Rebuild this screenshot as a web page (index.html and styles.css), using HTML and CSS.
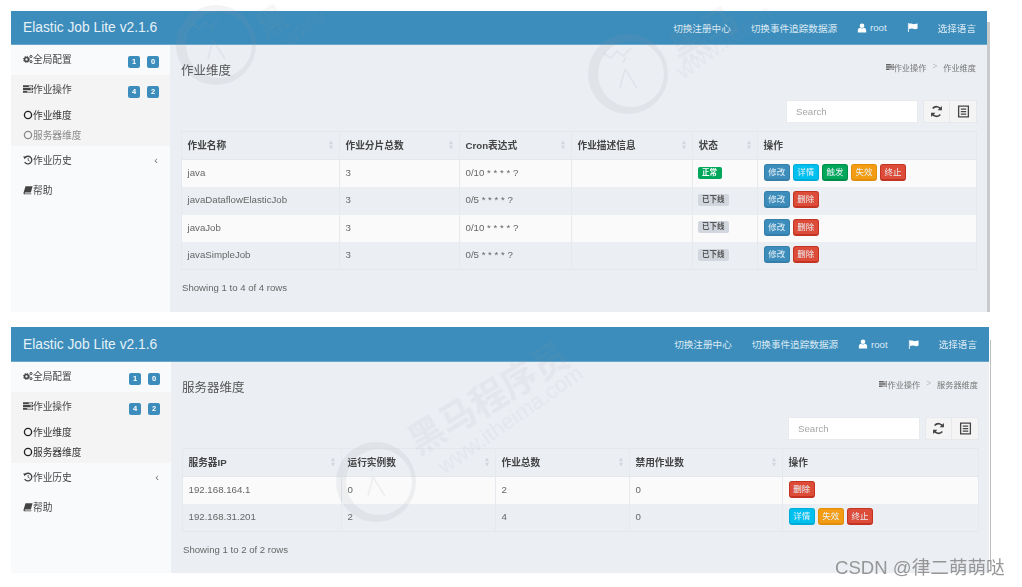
FILE: index.html
```html
<!DOCTYPE html>
<html lang="zh">
<head>
    <meta charset="UTF-8">
    <title>Elastic Job Lite</title>
    <link rel="stylesheet" href="styles.css">
</head>
<body>
<svg class="defs" width="0" height="0">
    <symbol id="i-cogs" viewBox="0 0 12 12">
        <circle cx="4.2" cy="6.5" r="2.3" fill="none" stroke="currentColor" stroke-width="1.8"/>
        <circle cx="4.2" cy="6.5" r="3.7" fill="none" stroke="currentColor" stroke-width="1.2" stroke-dasharray="1.4 1.5"/>
        <circle cx="9.6" cy="3" r="1.3" fill="none" stroke="currentColor" stroke-width="1.2"/>
        <circle cx="9.6" cy="9.2" r="1.3" fill="none" stroke="currentColor" stroke-width="1.2"/>
    </symbol>
    <symbol id="i-tasks" viewBox="0 0 12 12">
        <path d="M0 1.5h12v2.4H0zM0 4.8h12v2.4H0zM0 8.1h12v2.4H0z" fill="currentColor"/>
        <path d="M7 2.2h4v1H7zM9 5.5h2v1H9zM5 8.8h6v1H5z" fill="#fff"/>
    </symbol>
    <symbol id="i-circle" viewBox="0 0 12 12">
        <circle cx="6" cy="6" r="4.3" fill="none" stroke="currentColor" stroke-width="1.6"/>
    </symbol>
    <symbol id="i-history" viewBox="0 0 12 12">
        <path d="M2.2 3.4A4.6 4.6 0 1 1 2 8.4" fill="none" stroke="currentColor" stroke-width="1.6"/>
        <path d="M.3 1.6l4 .4-2.6 3z" fill="currentColor"/>
        <path d="M6.2 3.6v2.8l1.8 1" fill="none" stroke="currentColor" stroke-width="1"/>
    </symbol>
    <symbol id="i-book" viewBox="0 0 12 12">
        <path d="M3 1.5h8.500L9.400 9H2.600c-.8 0-.8 1.200 0 1.200h7.600l-.3 1H2C.6 11.200 .4 9.800 .8 8.600z" fill="currentColor"/>
    </symbol>
    <symbol id="i-user" viewBox="0 0 12 12">
        <circle cx="6" cy="3.300" r="2.800" fill="currentColor"/>
        <path d="M1 11.500V8.800C1 7 2.500 6 3.800 5.800 5 6.700 7 6.700 8.200 5.800 9.500 6 11 7 11 8.800v2.700z" fill="currentColor"/>
    </symbol>
    <symbol id="i-flag" viewBox="0 0 12 12">
        <path d="M1 1h.9v10H1z" fill="currentColor"/>
        <path d="M2 2c2.500-1 4 1 6.500.3L11.500 1.500v5.700C9 8.500 7 7.300 5 7.200 4 7.200 3 7.500 2 8z" fill="currentColor"/>
    </symbol>
    <symbol id="i-refresh" viewBox="0 0 12 12">
        <path d="M10.100 4.500A4.400 4.400 0 0 0 2.500 3.200M1.900 7.500A4.400 4.400 0 0 0 9.500 8.800" fill="none" stroke="currentColor" stroke-width="1.500"/>
        <path d="M11 .9v4H7zM1 11.100v-4h4z" fill="currentColor"/>
    </symbol>
    <symbol id="i-list" viewBox="0 0 12 12">
        <path d="M1.500 1h9v10h-9z" fill="none" stroke="currentColor" stroke-width="1.200"/>
        <path d="M3.500 3.200h5v1.100h-5zM3.500 5.500h5v1.100h-5zM3.500 7.800h5v1.100h-5z" fill="currentColor"/>
    </symbol>
    <symbol id="i-sort" viewBox="0 0 6 12">
        <path d="M3 .5l2.500 4.500h-5zM3 11.500L.5 7h5z" fill="currentColor"/>
    </symbol>
    <symbol id="i-ring" viewBox="0 0 82 82">
        <path fill-rule="evenodd" d="M41 1a40 40 0 1 0 0 80 40 40 0 0 0 0-80zM44 8a33 33 0 1 1 0 66 33 33 0 0 1 0-66z" fill="currentColor"/>
        <path d="M38 36l-5 19M38 36l12 19M36 30l3-6M16 20l8 5 6-7 6 5 8-8" fill="none" stroke="currentColor" stroke-width="1.600"/>
    </symbol>
</svg>

<div class="shot shot-one">
    <header class="topbar">
        <span class="brand">Elastic Job Lite v2.1.6</span>
        <nav class="topnav">
            <a>切换注册中心</a>
            <a>切换事件追踪数据源</a>
            <a><svg class="ic ic-white"><use href="#i-user"/></svg> root</a>
            <a><svg class="ic ic-white ic-flag"><use href="#i-flag"/></svg></a>
            <a>选择语言</a>
        </nav>
    </header>
    <div class="body">
        <aside class="side">
            <div class="item"><svg class="ic"><use href="#i-cogs"/></svg>全局配置<span class="badges"><b>1</b><b>0</b></span></div>
            <div class="group">
                <div class="item"><svg class="ic"><use href="#i-tasks"/></svg>作业操作<span class="badges"><b>4</b><b>2</b></span></div>
                <div class="sub"><svg class="ic"><use href="#i-circle"/></svg>作业维度</div>
                <div class="sub sub-off"><svg class="ic"><use href="#i-circle"/></svg>服务器维度</div>
            </div>
            <div class="item"><svg class="ic"><use href="#i-history"/></svg>作业历史<span class="chev">‹</span></div>
            <div class="item"><svg class="ic"><use href="#i-book"/></svg>帮助</div>
        </aside>
        <main class="main">
            <div class="titlerow">
                <h2>作业维度</h2>
                <div class="crumb"><svg class="ic ic-sm"><use href="#i-tasks"/></svg>作业操作<i>&gt;</i>作业维度</div>
            </div>
            <div class="tools">
                <div class="search">Search</div>
                <div class="btns">
                    <span><svg class="ic ic-tool"><use href="#i-refresh"/></svg></span>
                    <span><svg class="ic ic-tool"><use href="#i-list"/></svg></span>
                </div>
            </div>
            <table class="grid">
                <colgroup><col class="j1"><col class="j2"><col class="j3"><col class="j4"><col class="j5"><col></colgroup>
                <thead>
                    <tr>
                        <th><div>作业名称<svg class="sort"><use href="#i-sort"/></svg></div></th>
                        <th><div>作业分片总数<svg class="sort"><use href="#i-sort"/></svg></div></th>
                        <th><div>Cron表达式<svg class="sort"><use href="#i-sort"/></svg></div></th>
                        <th><div>作业描述信息<svg class="sort"><use href="#i-sort"/></svg></div></th>
                        <th><div>状态<svg class="sort"><use href="#i-sort"/></svg></div></th>
                        <th><div>操作</div></th>
                    </tr>
                </thead>
                <tbody>
                    <tr>
                        <td>java</td><td>3</td><td>0/10 * * * * ?</td><td></td>
                        <td><span class="tag tag-ok">正常</span></td>
                        <td class="acts"><a class="btn blue">修改</a><a class="btn cyan">详情</a><a class="btn green">触发</a><a class="btn amber">失效</a><a class="btn red">终止</a></td>
                    </tr>
                    <tr>
                        <td>javaDataflowElasticJob</td><td>3</td><td>0/5 * * * * ?</td><td></td>
                        <td><span class="tag">已下线</span></td>
                        <td class="acts"><a class="btn blue">修改</a><a class="btn red">删除</a></td>
                    </tr>
                    <tr>
                        <td>javaJob</td><td>3</td><td>0/10 * * * * ?</td><td></td>
                        <td><span class="tag">已下线</span></td>
                        <td class="acts"><a class="btn blue">修改</a><a class="btn red">删除</a></td>
                    </tr>
                    <tr>
                        <td>javaSimpleJob</td><td>3</td><td>0/5 * * * * ?</td><td></td>
                        <td><span class="tag">已下线</span></td>
                        <td class="acts"><a class="btn blue">修改</a><a class="btn red">删除</a></td>
                    </tr>
                </tbody>
            </table>
            <p class="rows">Showing 1 to 4 of 4 rows</p>
        </main>
    </div>
</div>

<div class="shot shot-two">
    <header class="topbar">
        <span class="brand">Elastic Job Lite v2.1.6</span>
        <nav class="topnav">
            <a>切换注册中心</a>
            <a>切换事件追踪数据源</a>
            <a><svg class="ic ic-white"><use href="#i-user"/></svg> root</a>
            <a><svg class="ic ic-white ic-flag"><use href="#i-flag"/></svg></a>
            <a>选择语言</a>
        </nav>
    </header>
    <div class="body">
        <aside class="side">
            <div class="item"><svg class="ic"><use href="#i-cogs"/></svg>全局配置<span class="badges"><b>1</b><b>0</b></span></div>
            <div class="group">
                <div class="item"><svg class="ic"><use href="#i-tasks"/></svg>作业操作<span class="badges"><b>4</b><b>2</b></span></div>
                <div class="sub"><svg class="ic"><use href="#i-circle"/></svg>作业维度</div>
                <div class="sub"><svg class="ic"><use href="#i-circle"/></svg>服务器维度</div>
            </div>
            <div class="item"><svg class="ic"><use href="#i-history"/></svg>作业历史<span class="chev">‹</span></div>
            <div class="item"><svg class="ic"><use href="#i-book"/></svg>帮助</div>
        </aside>
        <main class="main">
            <div class="titlerow">
                <h2>服务器维度</h2>
                <div class="crumb"><svg class="ic ic-sm"><use href="#i-tasks"/></svg>作业操作<i>&gt;</i>服务器维度</div>
            </div>
            <div class="tools">
                <div class="search">Search</div>
                <div class="btns">
                    <span><svg class="ic ic-tool"><use href="#i-refresh"/></svg></span>
                    <span><svg class="ic ic-tool"><use href="#i-list"/></svg></span>
                </div>
            </div>
            <table class="grid">
                <colgroup><col class="s1"><col class="s2"><col class="s3"><col class="s4"><col></colgroup>
                <thead>
                    <tr>
                        <th><div>服务器IP<svg class="sort"><use href="#i-sort"/></svg></div></th>
                        <th><div>运行实例数<svg class="sort"><use href="#i-sort"/></svg></div></th>
                        <th><div>作业总数<svg class="sort"><use href="#i-sort"/></svg></div></th>
                        <th><div>禁用作业数<svg class="sort"><use href="#i-sort"/></svg></div></th>
                        <th><div>操作</div></th>
                    </tr>
                </thead>
                <tbody>
                    <tr>
                        <td>192.168.164.1</td><td>0</td><td>2</td><td>0</td>
                        <td class="acts"><a class="btn red">删除</a></td>
                    </tr>
                    <tr>
                        <td>192.168.31.201</td><td>2</td><td>4</td><td>0</td>
                        <td class="acts"><a class="btn cyan">详情</a><a class="btn amber">失效</a><a class="btn red">终止</a></td>
                    </tr>
                </tbody>
            </table>
            <p class="rows">Showing 1 to 2 of 2 rows</p>
        </main>
    </div>
</div>

<!-- watermarks lying over the screenshots -->
<svg class="mark mark-ring ring1"><use href="#i-ring"/></svg>
<svg class="mark mark-ring ring2"><use href="#i-ring"/></svg>
<svg class="mark mark-ring ring3"><use href="#i-ring"/></svg>
<div class="mark mark-cn cn1">黑</div>
<div class="mark mark-url url1">www</div>
<div class="mark mark-cn cn2">黑马</div>
<div class="mark mark-url url2">www.itheim</div>
<div class="mark mark-cn cn3">黑马程序员</div>
<div class="mark mark-url url3">www.itheima.com</div>
<div class="csdn">CSDN @律二萌萌哒</div>
</body>
</html>
```
FILE: styles.css
```css
html, body {
    margin: 0;
    height: 100%;
    background: #fff;
}
body {
    position: relative;
    overflow: hidden;
    padding-top: 11px;
    box-sizing: border-box;
    font-family: "Liberation Sans", "Noto Sans CJK SC", sans-serif;
    font-size: 9.7px;
    color: #444;
}
.defs {
    position: absolute;
}

/* one screenshot block */
.shot {
    position: relative;
    margin-left: 11px;
    display: flex;
    flex-direction: column;
    filter: blur(0.35px);
}
.shot-one {
    width: 976px;
    height: 301px;
    margin-bottom: 15px;
}
.shot-two {
    width: 978px;
    height: 246px;
}
.shot-one::after {
    content: "";
    position: absolute;
    top: 11px;
    bottom: 0;
    right: -3px;
    width: 3px;
    background: #c9cacc;
}
.shot-two::after {
    content: "";
    position: absolute;
    top: 13px;
    bottom: 8px;
    right: -2px;
    width: 1px;
    background: #bdbdbd;
}

.topbar {
    height: 34px;
    flex: none;
    background: #3c8dbc;
    display: flex;
    align-items: center;
    justify-content: space-between;
    padding: 0 11px 0 12px;
    box-sizing: border-box;
    color: #fff;
    border-bottom: 1px solid #6ba7cb;
}
.shot-two .topbar {
    height: 35px;
    padding-right: 12px;
}
.brand {
    font-size: 13.8px;
    color: #e6f1f7;
}
.topnav {
    display: flex;
    align-items: center;
    gap: 20px;
    font-size: 9.6px;
    color: #dcebf4;
}
.topnav a {
    display: flex;
    align-items: center;
    gap: 3px;
}

.ic {
    width: 10px;
    height: 10px;
    flex: none;
    color: #444;
}
.ic-white {
    color: #fff;
}
.ic-flag {
    width: 11px;
    height: 11px;
}
.ic-sm {
    width: 8px;
    height: 8px;
    color: #666;
}
.ic-tool {
    width: 13px;
    height: 13px;
    color: #444;
}

.body {
    flex: 1;
    display: flex;
    min-height: 0;
}
.side {
    width: 159px;
    flex: none;
    background: #f9fafc;
}
.shot-two .side {
    width: 160px;
}
.item {
    height: 30px;
    padding: 0 11px 2px 12px;
    box-sizing: border-box;
    display: flex;
    align-items: center;
}
.group {
    background: #f4f4f5;
    padding-bottom: 1px;
}
.sub {
    height: 20px;
    padding-left: 12px;
    box-sizing: border-box;
    display: flex;
    align-items: center;
    color: #333;
}
.sub .ic {
    color: #222;
}
.sub-off, .sub-off .ic {
    color: #8a8a8a;
}
.badges {
    margin-left: auto;
    margin-top: 6px;
    display: flex;
    gap: 7px;
}
.badges b {
    width: 12px;
    height: 12px;
    border-radius: 2px;
    background: #3c8dbc;
    color: #fff;
    font-size: 7.5px;
    line-height: 12px;
    text-align: center;
}
.chev {
    margin-left: auto;
    padding-right: 1px;
    font-size: 11px;
    color: #777;
}

.main {
    flex: 1;
    min-width: 0;
    background: #ebeef3;
    padding: 17px 10px 0 11px;
}
.titlerow {
    height: 18px;
    display: flex;
    justify-content: space-between;
    margin-bottom: 20px;
}
.titlerow h2 {
    margin: 0;
    font-size: 12.5px;
    font-weight: normal;
    line-height: 18px;
    color: #555;
}
.crumb {
    font-size: 8.2px;
    color: #777;
    display: flex;
    align-items: center;
    height: 9px;
    margin-right: 1px;
}
.crumb i {
    font-style: normal;
    color: #bbb;
    margin: 0 6px;
}
.tools {
    display: flex;
    justify-content: flex-end;
    gap: 5px;
    height: 23px;
    margin-bottom: 8px;
}
.search {
    width: 132px;
    box-sizing: border-box;
    background: #fff;
    border: 1px solid #e8eaee;
    padding-left: 9px;
    line-height: 21px;
    color: #a5a5a5;
}
.btns {
    display: flex;
}
.btns span {
    width: 27px;
    box-sizing: border-box;
    background: #f4f4f4;
    border: 1px solid #e6e8ec;
    display: flex;
    align-items: center;
    justify-content: center;
}
.btns span + span {
    border-left: 0;
}

.grid {
    width: 100%;
    table-layout: fixed;
    border-collapse: collapse;
    border: 1px solid #e4e7ec;
}
col.j1 { width: 158px; }
col.j2 { width: 120px; }
col.j3 { width: 112px; }
col.j4 { width: 121px; }
col.j5 { width: 65px; }
col.s1 { width: 159px; }
col.s2 { width: 154px; }
col.s3 { width: 134px; }
col.s4 { width: 153px; }

.grid th, .grid td {
    padding: 0 5.5px 2px;
    box-sizing: border-box;
    border: 1px solid #e6e9ee;
    border-width: 0 1px;
    text-align: left;
    overflow: hidden;
}
.grid th {
    height: 28px;
    font-weight: bold;
    color: #444;
    border-bottom: 1px solid #e4e7ec;
}
.grid th div {
    display: flex;
    justify-content: space-between;
    align-items: center;
}
.grid td {
    height: 27.5px;
    color: #666;
}
.grid tbody tr:nth-child(odd) td {
    background: #fafafa;
}
.sort {
    width: 6px;
    height: 10px;
    color: #d3d6dc;
    flex: none;
}

.tag {
    display: inline-block;
    margin-left: -1px;
    padding: 0 4.5px;
    line-height: 12px;
    font-size: 7.5px;
    border-radius: 2px;
    background: #d2d6de;
    color: #555;
    font-weight: bold;
    vertical-align: 1px;
}
.tag-ok {
    background: #00a65a;
    color: #fff;
}
.acts {
    white-space: nowrap;
}
.btn {
    display: inline-block;
    width: 26.5px;
    height: 17px;
    box-sizing: border-box;
    margin-right: 2.6px;
    text-align: center;
    line-height: 14.5px;
    font-size: 8.5px;
    color: #e9f2f7;
    border-radius: 3px;
    border: 1px solid;
    border-bottom-width: 2px;
    vertical-align: middle;
}
.blue { background: #3c8dbc; border-color: #367fa9; }
.cyan { background: #00c0ef; border-color: #00acd6; }
.green { background: #00a65a; border-color: #008d4c; }
.amber { background: #f39c12; border-color: #e08e0b; }
.red { background: #dd4b39; border-color: #c23321; }

.rows {
    margin: 12px 0 0 1px;
    font-size: 9.6px;
    line-height: 12px;
    color: #666;
}

/* overlays: watermarks and the csdn stamp */
.mark {
    position: absolute;
    pointer-events: none;
    white-space: nowrap;
    line-height: 1;
    color: rgba(150, 155, 165, 0.085);
    filter: blur(0.5px);
}
.mark-ring {
    width: 82px;
    height: 82px;
    color: rgba(150, 155, 165, 0.12);
}
.ring1 { left: 175px; top: 4px; }
.ring2 { left: 587px; top: 33px; }
.ring3 { left: 335px; top: 441px; }
.mark-cn {
    font-size: 36px;
    font-weight: bold;
    transform: rotate(-31deg);
}
.mark-url {
    font-size: 22px;
    transform: rotate(-35deg);
}
.cn1 { font-size: 30px; left: 257px; top: 7px; }
.url1 { left: 280px; top: 16px; }
.cn2 { left: 669px; top: 17px; }
.url2 { left: 669px; top: 31px; }
.cn3 { left: 399px; top: 381px; }
.url3 { left: 425px; top: 409px; }
.csdn {
    position: absolute;
    left: 835px;
    top: 556px;
    font-size: 18.6px;
    line-height: 24px;
    color: #969696;
    white-space: nowrap;
}
```
